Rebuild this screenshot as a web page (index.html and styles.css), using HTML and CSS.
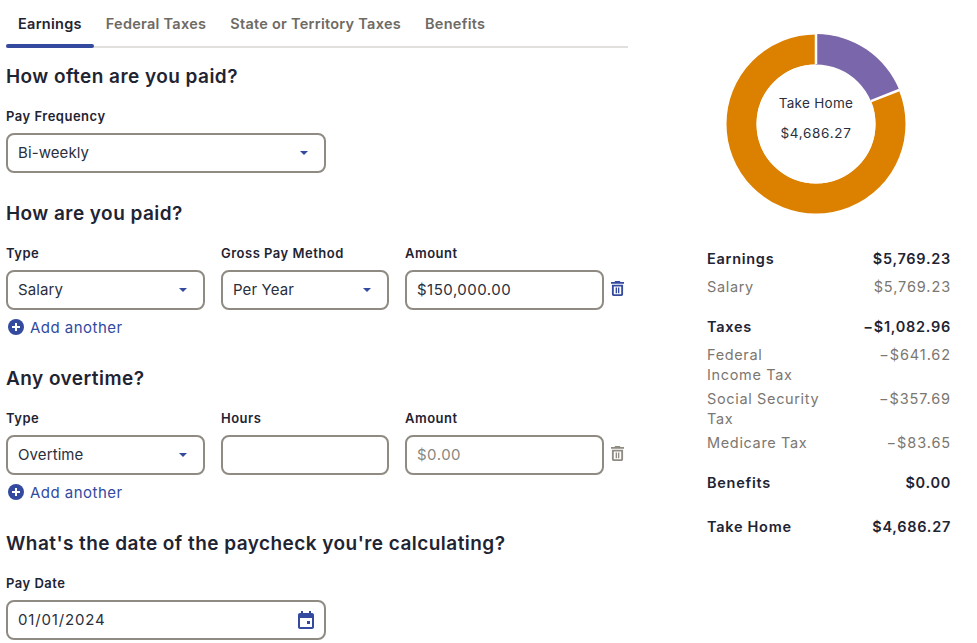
FILE: index.html
```html
<!DOCTYPE html>
<html lang="en">
<head>
<meta charset="utf-8">
<title>Paycheck Calculator</title>
<link rel="stylesheet" href="styles.css">
</head>
<body>
<main class="page">
  <section class="form">
    <nav class="tabs">
      <a class="tab active">Earnings</a>
      <a class="tab">Federal Taxes</a>
      <a class="tab">State or Territory Taxes</a>
      <a class="tab">Benefits</a>
    </nav>

    <h2 class="first">How often are you paid?</h2>
    <div class="row">
      <div class="field w320">
        <label>Pay Frequency</label>
        <div class="box"><span>Bi-weekly</span><i class="caret"></i></div>
      </div>
    </div>

    <h2>How are you paid?</h2>
    <div class="row">
      <div class="field w199">
        <label>Type</label>
        <div class="box"><span>Salary</span><i class="caret"></i></div>
      </div>
      <div class="field w168">
        <label>Gross Pay Method</label>
        <div class="box"><span>Per Year</span><i class="caret"></i></div>
      </div>
      <div class="field w199">
        <label>Amount</label>
        <div class="box"><span class="num">$150,000.00</span></div>
      </div>
      <svg class="trash" viewBox="0 0 14 16" width="13" height="15"><path fill="currentColor" fill-rule="evenodd" d="M4.500 0h5l.8 1H14v2H0V1h3.700zM1 4h12v10.200c0 1-.8 1.800-1.800 1.800H2.800C1.800 16 1 15.200 1 14.200zm2 1.800v8.400h8V5.800zM5 7h1.500v6H5zm2.500 0H9v6H7.500z"/></svg>
    </div>
    <a class="add"><svg viewBox="0 0 16 16" width="16" height="16"><circle cx="8" cy="8" r="8" fill="currentColor"/><path d="M7 4h2v3h3v2H9v3H7V9H4V7h3z" fill="#fff"/></svg>Add another</a>

    <h2 class="after-add">Any overtime?</h2>
    <div class="row">
      <div class="field w199">
        <label>Type</label>
        <div class="box"><span>Overtime</span><i class="caret"></i></div>
      </div>
      <div class="field w168">
        <label>Hours</label>
        <div class="box"></div>
      </div>
      <div class="field w199">
        <label>Amount</label>
        <div class="box"><span class="num ph">$0.00</span></div>
      </div>
      <svg class="trash off" viewBox="0 0 14 16" width="13" height="15"><path fill="currentColor" fill-rule="evenodd" d="M4.500 0h5l.8 1H14v2H0V1h3.700zM1 4h12v10.200c0 1-.8 1.800-1.800 1.800H2.800C1.800 16 1 15.200 1 14.200zm2 1.800v8.400h8V5.800zM5 7h1.500v6H5zm2.500 0H9v6H7.500z"/></svg>
    </div>
    <a class="add"><svg viewBox="0 0 16 16" width="16" height="16"><circle cx="8" cy="8" r="8" fill="currentColor"/><path d="M7 4h2v3h3v2H9v3H7V9H4V7h3z" fill="#fff"/></svg>Add another</a>

    <h2 class="after-add">What's the date of the paycheck you're calculating?</h2>
    <div class="row">
      <div class="field w320">
        <label>Pay Date</label>
        <div class="box"><span class="date">01/01/2024</span>
          <svg class="cal" viewBox="0 0 16 18" width="16" height="18"><path fill="currentColor" fill-rule="evenodd" d="M3 0h2v2h6V0h2v2h1c1.100 0 2 .9 2 2v12c0 1.100-.9 2-2 2H2c-1.100 0-2-.9-2-2V4c0-1.100.9-2 2-2h1zM2 7v9h12V7zm7 3h3v3H9z"/></svg>
        </div>
      </div>
    </div>
  </section>

  <aside class="summary">
    <div class="donut">
      <svg viewBox="0 0 180 180" width="180" height="180">
        <circle cx="90" cy="90" r="74.500" fill="none" stroke="#dc8000" stroke-width="30"/>
        <path d="M90 90V0A90 90 0 0 1 173.300 56L90 90z" fill="#7a66ab"/>
        <circle cx="90" cy="90" r="59.500" fill="#fff"/>
        <path d="M90 30V0M145 67.200L173.300 56" stroke="#fff" stroke-width="2.500" fill="none"/>
      </svg>
      <div class="donut-label"><span>Take Home</span><span class="value">$4,686.27</span></div>
    </div>

    <dl class="totals">
      <div class="line strong"><dt>Earnings</dt><dd>$5,769.23</dd></div>
      <div class="line sub first-sub"><dt>Salary</dt><dd>$5,769.23</dd></div>
      <div class="line strong gap"><dt>Taxes</dt><dd>−$1,082.96</dd></div>
      <div class="line sub first-sub"><dt>Federal<br>Income Tax</dt><dd>−$641.62</dd></div>
      <div class="line sub"><dt>Social Security<br>Tax</dt><dd>−$357.69</dd></div>
      <div class="line sub"><dt>Medicare Tax</dt><dd>−$83.65</dd></div>
      <div class="line strong gap"><dt>Benefits</dt><dd>$0.00</dd></div>
      <div class="line strong gap wide"><dt>Take Home</dt><dd>$4,686.27</dd></div>
    </dl>
  </aside>
</main>
</body>
</html>
```

FILE: styles.css
```css
* { box-sizing: border-box; }
html, body { margin: 0; padding: 0; background: #fff; }
body {
  font-family: "Inter", "Liberation Sans", sans-serif;
  color: #1f2433;
  height: 643px;
  overflow: hidden;
}
.page {
  display: grid;
  grid-template-columns: 622px 244px;
  column-gap: 79px;
  padding-left: 6px;
}
.tabs {
  display: flex;
  height: 48px;
  border-bottom: 2px solid #e2e0dd;
  align-items: stretch;
}
.tab {
  position: relative;
  padding: 14px 12px 0;
  font-size: 14.500px;
  line-height: 20px;
  font-weight: 600;
  letter-spacing: .27px;
  color: #6e6a64;
}
.tab.active { color: #1f2433; }
.tab.active::after {
  content: "";
  position: absolute;
  left: 0; right: 0; bottom: -2px;
  height: 4px;
  border-radius: 2px;
  background: #334a9f;
}
h2 {
  margin: 0;
  font-size: 19px;
  line-height: 26px;
  font-weight: 600;
  letter-spacing: .45px;
  color: #1f2433;
}
h2.first { margin-top: 16px; }
h2.after-add { margin-top: 29px; }
.row + h2 { margin-top: 28px; }
.row { display: flex; align-items: flex-end; gap: 16px; margin-top: 17px; }
.field { display: flex; flex-direction: column; }
.w320 { width: 320px; }
.w199 { width: 199px; }
.w168 { width: 168px; }
.field label {
  font-size: 13px;
  line-height: 18px;
  font-weight: 600;
  letter-spacing: .5px;
  margin-bottom: 8px;
}
.box {
  height: 40px;
  border: 2px solid #8f8b83;
  border-radius: 8px;
  display: flex;
  align-items: center;
  justify-content: space-between;
  padding: 0 10px;
  font-size: 15px;
  letter-spacing: .1px;
  color: #2a2f3d;
  background: #fff;
}
.box span { margin-bottom: 2px; }
.num { letter-spacing: .5px; }
.date { letter-spacing: .85px; }
.ph { color: #8a8780; }
.caret {
  width: 0; height: 0;
  margin-right: 6px;
  border-left: 4.500px solid transparent;
  border-right: 4.500px solid transparent;
  border-top: 4.500px solid #334a9f;
}
.trash { color: #334a9f; margin: 0 0 14px -9px; flex: none; }
.trash.off { color: #8f8b83; }
.cal { color: #334a9f; }
.add {
  display: flex;
  align-items: center;
  gap: 6px;
  margin: 7px 0 0 2px;
  height: 20px;
  font-size: 15px;
  letter-spacing: .48px;
  color: #334a9f;
}
.add svg { flex: none; }
.summary { display: flex; flex-direction: column; }
.donut {
  position: relative;
  width: 180px;
  height: 180px;
  margin: 34px 0 0 19px;
}
.donut svg { display: block; }
.donut-label {
  position: absolute;
  inset: 0;
  display: flex;
  flex-direction: column;
  align-items: center;
  justify-content: center;
  gap: 10px;
  padding-bottom: 12px;
  font-size: 13.500px;
  line-height: 20px;
  letter-spacing: .3px;
  color: #2a2f3d;
}
.donut-label .value { letter-spacing: .7px; }
.totals { margin: 35px 0 0; }
.line {
  display: flex;
  justify-content: space-between;
  font-size: 14.500px;
  line-height: 20px;
  letter-spacing: .72px;
  margin-top: 4px;
}
.line:first-child { margin-top: 0; }
.line dt, .line dd { margin: 0; }
.strong { font-weight: 600; color: #1f2433; }
.sub { color: #7b7771; letter-spacing: .65px; }
.sub dd { letter-spacing: .9px; }
.line.first-sub { margin-top: 8px; }
.line.gap { margin-top: 20px; }
.line.wide { margin-top: 24px; }
```
